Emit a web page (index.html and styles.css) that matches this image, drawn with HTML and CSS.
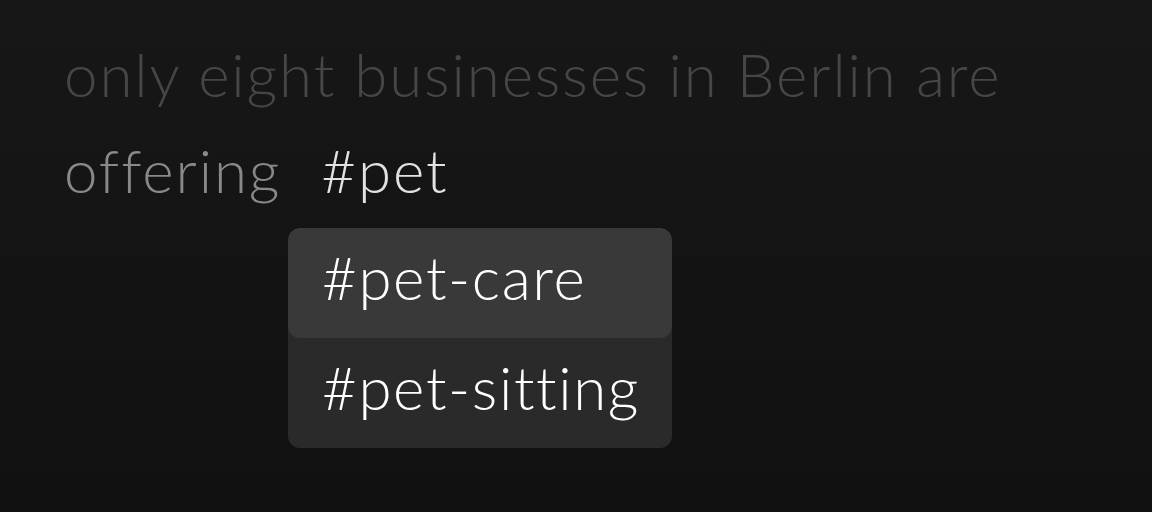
FILE: index.html
```html
<!DOCTYPE html>
<html lang="en">
<head>
<meta charset="utf-8">
<title>Tag suggestions</title>
<link rel="stylesheet" href="styles.css">
</head>
<body>
<main class="editor">
  <p class="text">
    <span class="faded">only eight businesses in Berlin are</span><br>
    <span class="recent">offering</span><span class="tag">#pet</span>
  </p>
  <ul class="suggest">
    <li class="item active">#pet-care</li>
    <li class="item">#pet-sitting</li>
  </ul>
</main>
</body>
</html>
```
FILE: styles.css
```css
html, body {
  margin: 0;
  height: 100%;
}
body {
  background: linear-gradient(180deg, #171717 0%, #111111 100%);
  font-family: "Lato", "Noto Sans", sans-serif;
  font-weight: 300;
  overflow: hidden;
}
.editor {
  padding: 26px 0 0 64px;
}
.text {
  margin: 0;
  font-size: 60px;
  line-height: 96px;
  letter-spacing: 1.9px;
  white-space: nowrap;
}
.faded {
  color: #464646;
}
.recent {
  color: #898989;
}
.tag {
  color: #e2e2e2;
  margin-left: 40px;
}
.suggest {
  list-style: none;
  margin: 10px 0 0 224px;
  padding: 0;
  width: 384px;
  background: #2a2a2a;
  border-radius: 12px;
  overflow: hidden;
}
.item {
  color: #ffffff;
  font-size: 60px;
  line-height: 96px;
  letter-spacing: 1.6px;
  padding: 1px 0 13px 34px;
  border-radius: 12px;
}
.item.active {
  background: #393939;
}
```
